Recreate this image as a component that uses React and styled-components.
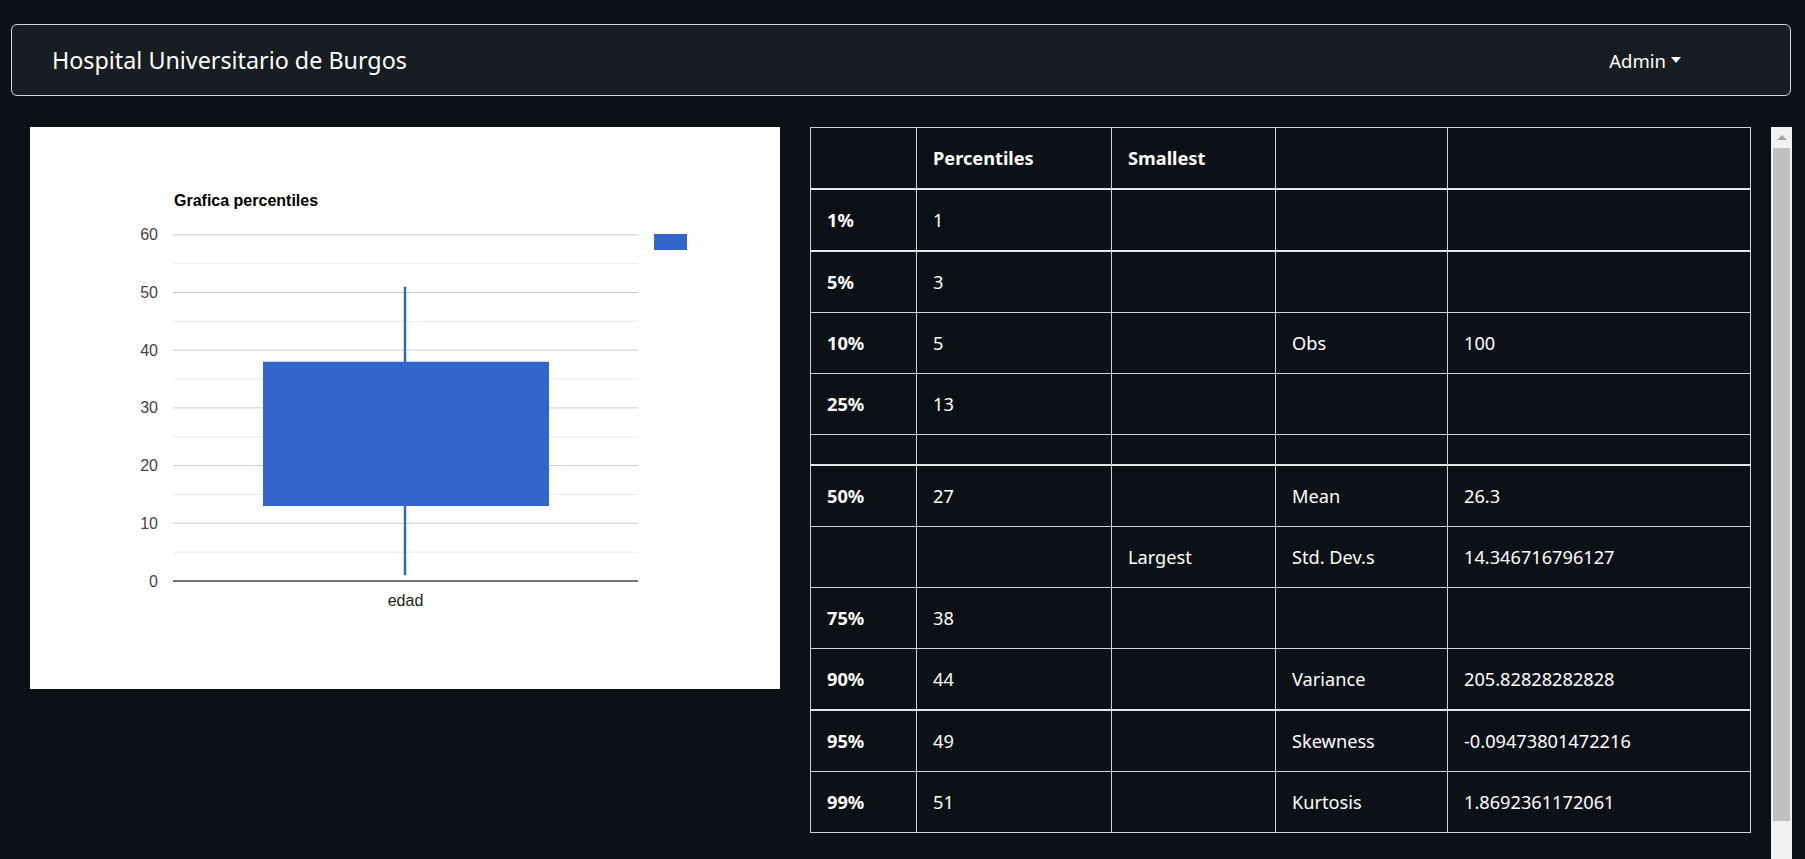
import React from 'react';
import styled, { createGlobalStyle } from 'styled-components';

const GlobalStyle = createGlobalStyle`
  body {
    margin: 0;
    background-color: #0d1117;
    font-family: "Noto Sans", "Open Sans", sans-serif;
    color: #fff;
    overflow: hidden;
  }
`;

const Page = styled.div`
  padding: 24px 14px 0 11px;
`;

const Navbar = styled.nav`
  height: 72px;
  box-sizing: border-box;
  display: flex;
  align-items: center;
  justify-content: space-between;
  padding: 0 109px 0 40px;
  background-color: #181c23;
  border: 1px solid #d6d8db;
  border-radius: 6px;
`;

const Brand = styled.span`
  font-size: 23.3px;
  color: #fff;
`;

const Dropdown = styled.span`
  font-size: 18.5px;
  color: #fff;
  display: flex;
  align-items: center;

  &::after {
    content: '';
    display: inline-block;
    margin-left: 5px;
    border-top: 6px solid #fff;
    border-left: 5px solid transparent;
    border-right: 5px solid transparent;
  }
`;

const Main = styled.div`
  display: flex;
  align-items: flex-start;
  margin-top: 31px;
  padding-left: 19px;
`;

const ChartPanel = styled.div`
  width: 750px;
  height: 562px;
  flex-shrink: 0;
  background-color: #fff;
`;

const Table = styled.table`
  margin-left: 30px;
  width: 940px;
  flex-shrink: 0;
  table-layout: fixed;
  border-collapse: collapse;
  font-size: 18.2px;
  color: #fff;
`;

const Row = styled.tr`
  border-bottom: ${(p) => (p.$divider ? '2px solid #e4e6e9' : '1px solid #cfd2d6')};
`;

const TopRow = styled(Row)`
  border-top: 1px solid #cfd2d6;
`;

const Cell = styled.td`
  border-left: 1px solid #cfd2d6;
  border-right: 1px solid #cfd2d6;
  padding: ${(p) => (p.$empty ? '0 16px' : '15px 16px')};
  height: ${(p) => (p.$empty ? '30px' : 'auto')};
  line-height: 30px;
  font-weight: ${(p) => (p.$bold ? 700 : 400)};
  white-space: nowrap;
  box-sizing: border-box;
`;

const Scrollbar = styled.div`
  margin-left: 20px;
  width: 21px;
  height: 760px;
  flex-shrink: 0;
  background-color: #f1f1f1;
  display: flex;
  flex-direction: column;
  align-items: center;
`;

const ScrollButton = styled.div`
  height: 21px;
  width: 100%;
  display: flex;
  align-items: center;
  justify-content: center;

  &::before {
    content: '';
    border-bottom: 5px solid #a3a3a3;
    border-left: 5px solid transparent;
    border-right: 5px solid transparent;
  }
`;

const Thumb = styled.div`
  width: 17px;
  height: 673px;
  background-color: #c1c1c1;
`;

const rows = [
  { cells: ['', 'Percentiles', 'Smallest', '', ''], head: true, divider: true },
  { cells: ['1%', '1', '', '', ''], divider: true },
  { cells: ['5%', '3', '', '', ''] },
  { cells: ['10%', '5', '', 'Obs', '100'] },
  { cells: ['25%', '13', '', '', ''] },
  { cells: ['', '', '', '', ''], empty: true, divider: true },
  { cells: ['50%', '27', '', 'Mean', '26.3'] },
  { cells: ['', '', 'Largest', 'Std. Dev.s', '14.346716796127'] },
  { cells: ['75%', '38', '', '', ''] },
  { cells: ['90%', '44', '', 'Variance', '205.82828282828'], divider: true },
  { cells: ['95%', '49', '', 'Skewness', '-0.09473801472216'] },
  { cells: ['99%', '51', '', 'Kurtosis', '1.8692361172061'] },
];

const colWidths = [106, 195, 164, 172, 303];

const chartFont = '"Liberation Sans", Arial, sans-serif';
const Y0 = 454;
const UNIT = 5.77;
const yOf = (v) => Y0 - v * UNIT;

const BoxChart = () => (
  <svg width="750" height="562" viewBox="0 0 750 562">
    <text x="144" y="79" fontFamily={chartFont} fontSize="16" fontWeight="700" fill="#000">
      Grafica percentiles
    </text>
    {[5, 15, 25, 35, 45, 55].map((v) => (
      <line key={'m' + v} x1="143" x2="608" y1={yOf(v)} y2={yOf(v)} stroke="#ebebeb" strokeWidth="1" />
    ))}
    {[10, 20, 30, 40, 50, 60].map((v) => (
      <line key={'g' + v} x1="143" x2="608" y1={yOf(v)} y2={yOf(v)} stroke="#cccccc" strokeWidth="1" />
    ))}
    {[0, 10, 20, 30, 40, 50, 60].map((v) => (
      <text key={'l' + v} x="128" y={yOf(v) + 5.5} textAnchor="end" fontFamily={chartFont} fontSize="16" fill="#444">
        {v}
      </text>
    ))}
    <line x1="375" x2="375" y1={yOf(51)} y2={yOf(1)} stroke="#3366cc" strokeWidth="2.5" />
    <rect x="233" y={yOf(38)} width="286" height={25 * UNIT} fill="#3366cc" />
    <line x1="143" x2="608" y1={Y0} y2={Y0} stroke="#757575" strokeWidth="2" />
    <text x="375.5" y="479" textAnchor="middle" fontFamily={chartFont} fontSize="16" fill="#222">
      edad
    </text>
    <rect x="624" y="107" width="33" height="16" fill="#3366cc" />
  </svg>
);

const App = () => {
  return (
    <Page>
      <GlobalStyle />
      <Navbar>
        <Brand>Hospital Universitario de Burgos</Brand>
        <Dropdown>Admin</Dropdown>
      </Navbar>
      <Main>
        <ChartPanel>
          <BoxChart />
        </ChartPanel>
        <Table>
          <colgroup>
            {colWidths.map((w, i) => (
              <col key={i} style={{ width: w }} />
            ))}
          </colgroup>
          <tbody>
            {rows.map((r, i) => {
              const R = i === 0 ? TopRow : Row;
              return (
                <R key={i} $divider={r.divider}>
                  {r.cells.map((c, j) => (
                    <Cell key={j} $empty={r.empty} $bold={r.head || j === 0}>
                      {c}
                    </Cell>
                  ))}
                </R>
              );
            })}
          </tbody>
        </Table>
        <Scrollbar>
          <ScrollButton />
          <Thumb />
        </Scrollbar>
      </Main>
    </Page>
  );
};

export default App;
